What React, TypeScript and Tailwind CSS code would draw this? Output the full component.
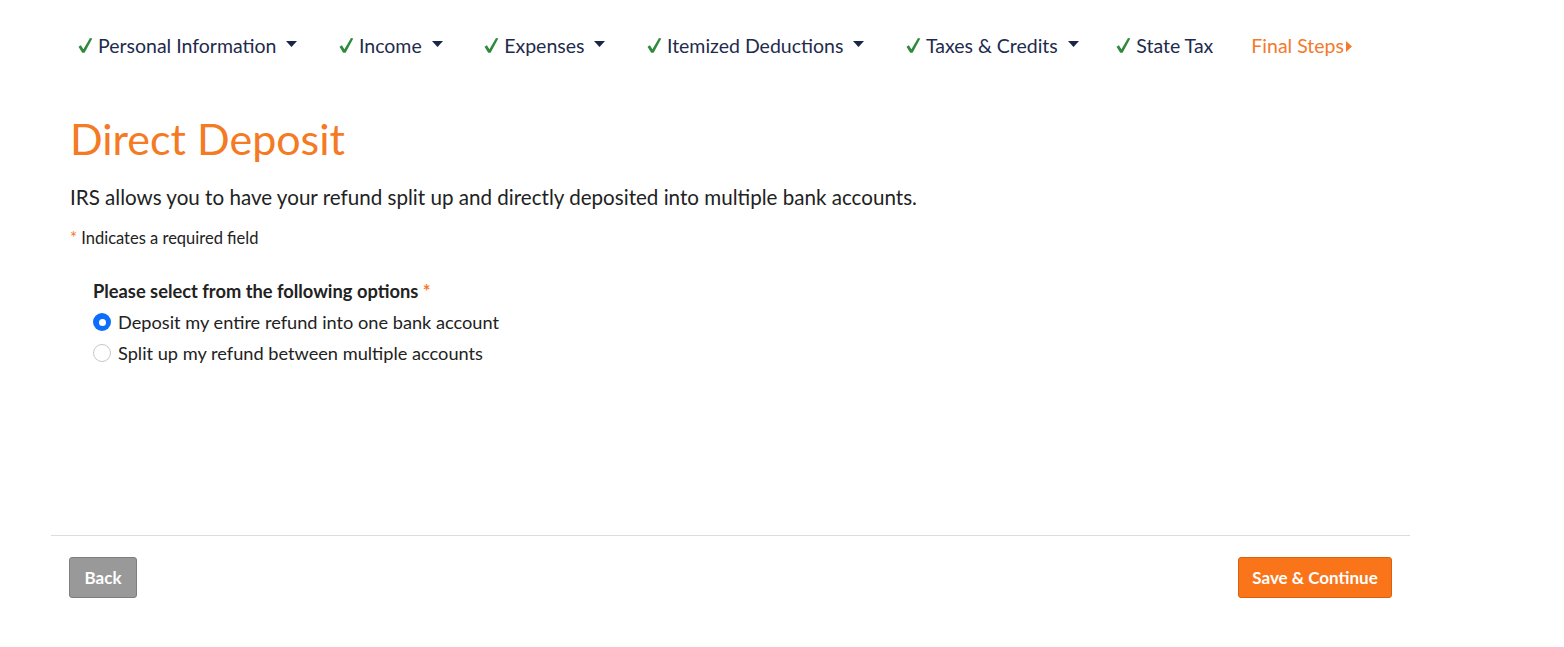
import React from "react";

const Check = () => (
  <svg width="15" height="17" viewBox="0 0 15 17" className="mr-[5px] mt-[-2px]">
    <path d="M0.5 9.8 L4.2 15.8 L6.6 15.8 L14.3 1.6 L12 1 L5.4 12.2 L2.9 8.3 Z" fill="#2f8a3b" />
  </svg>
);

const Caret = () => (
  <svg width="11" height="7" viewBox="0 0 11 7" className="ml-[10px] mt-[-4px]">
    <path d="M0 0 L11 0 L5.5 6 Z" fill="#1b2547" />
  </svg>
);

const NavItem = ({ label, caret = true }: { label: string; caret?: boolean }) => (
  <div className="flex items-center text-[#1e2b4d]">
    <Check />
    <span>{label}</span>
    {caret && <Caret />}
  </div>
);

export default function App() {
  return (
    <div
      className="w-[1564px] h-[647px] bg-white"
      style={{ fontFamily: "Lato, 'Open Sans', sans-serif" }}
    >
      <nav className="flex items-center h-[92px] pl-[78px] text-[19.5px] gap-[41.5px]">
        <NavItem label="Personal Information" />
        <NavItem label="Income" />
        <NavItem label="Expenses" />
        <NavItem label="Itemized Deductions" />
        <NavItem label="Taxes & Credits" />
        <div className="flex gap-[38px] ml-[-4px]">
          <NavItem label="State Tax" caret={false} />
          <div className="flex items-center text-[#f47a2b]">
            <span>Final Steps</span>
            <svg width="7" height="11" viewBox="0 0 7 11" className="ml-[2px]">
              <path d="M0 0 L6 5.5 L0 11 Z" fill="#f47a2b" />
            </svg>
          </div>
        </div>
      </nav>

      <div className="ml-[51px] w-[1359px]">
        <div className="px-[19px]">
          <h1 className="text-[43px] leading-none text-[#f47a24] mt-[25px]">Direct Deposit</h1>
          <p className="text-[20.6px] text-[#222] mt-[27px] leading-none">
            IRS allows you to have your refund split up and directly deposited into multiple bank accounts.
          </p>
          <p className="text-[16.5px] text-[#222] mt-[22px] leading-none">
            <span className="text-[#f47a24]">*</span> Indicates a required field
          </p>
          <div className="ml-[23px] mt-[36px]">
            <div className="text-[18.3px] font-bold text-[#222] leading-none">
              Please select from the following options <span className="text-[#f47a24]">*</span>
            </div>
            <div className="flex items-center mt-[13px] text-[18.2px] text-[#222] leading-none">
              <span className="w-[18px] h-[18px] rounded-full bg-[#0d6efd] flex items-center justify-center mr-[7px]">
                <span className="w-[7px] h-[7px] rounded-full bg-white" />
              </span>
              Deposit my entire refund into one bank account
            </div>
            <div className="flex items-center mt-[12px] text-[18.2px] text-[#222] leading-none">
              <span className="w-[18px] h-[18px] rounded-full border border-[#c8c8c8] mr-[7px]" />
              Split up my refund between multiple accounts
            </div>
          </div>
        </div>

        <div className="border-t border-[#dcdcdc] mt-[173px]" />

        <div className="flex justify-between px-[18px] mt-[21px]">
          <button className="w-[68px] h-[41px] bg-[#999] border border-[#7e7e7e] rounded-[3px] text-white font-bold text-[17px]">
            Back
          </button>
          <button className="w-[154px] h-[41px] bg-[#fa751a] border border-[#d9600c] rounded-[3px] text-white font-bold text-[17px]">
            Save &amp; Continue
          </button>
        </div>
      </div>
    </div>
  );
}
